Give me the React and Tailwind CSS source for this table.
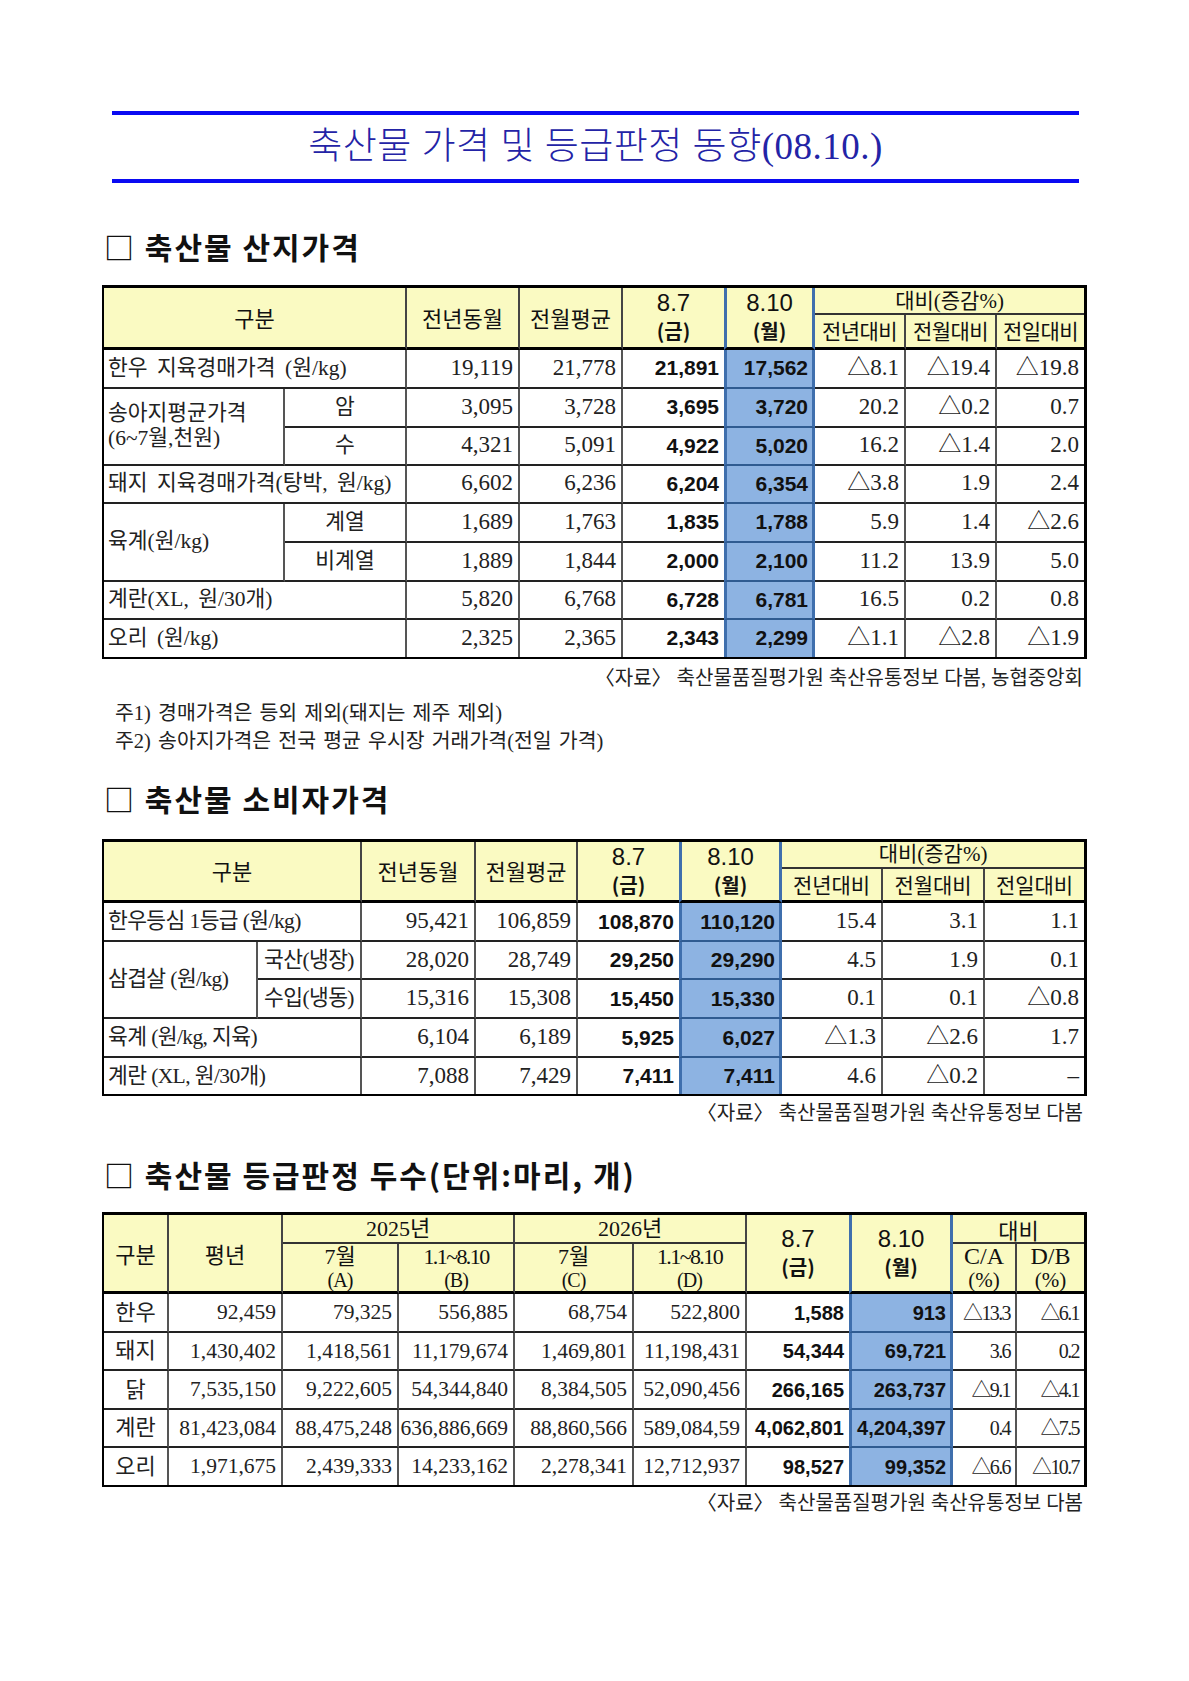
const SERIF = "font-['Liberation_Serif','Noto_Sans_CJK_KR',serif]";
const KR = "font-['Noto_Sans_CJK_KR',sans-serif]";
const BOLDN = "font-['Liberation_Sans','Noto_Sans_CJK_KR',sans-serif] font-bold";
const HEAD = "bg-[#fafac2] text-[#111] text-center align-middle p-0";

// one row of value cells: kinds n = plain number, b = bold, blue = bold on blue, r = ratio, c = condensed ratio
function Values({ vals, kinds, last, small }) {
  return vals.map((v, i) => {
    const k = kinds[i];
    const lastCol = i === vals.length - 1;
    const nextBlue = kinds[i + 1] === "blue";
    let cls = "align-middle text-right whitespace-nowrap p-0 ";
    if (k === "blue") {
      cls += "bg-[#8db3e2] border-x-[3px] border-x-[#3f6fad] pr-[4px] text-[#111] " + BOLDN + (small ? " text-[20px]" : " text-[21px]");
    } else if (k === "b") {
      cls += "pr-[5px] text-[#111] " + BOLDN + (small ? " text-[20px]" : " text-[21px]");
    } else if (k === "c") {
      cls += "pr-[5px] text-[#222] tracking-[-1.6px] text-[20px] " + SERIF;
    } else {
      cls += "pr-[5px] text-[#222] " + SERIF + (small ? " text-[21.5px]" : " text-[23px]");
    }
    if (!last) cls += k === "blue" ? " border-b-2 border-b-[#2f5b91]" : " border-b-2 border-b-[#222]";
    if (!lastCol && !nextBlue && k !== "blue") cls += " border-r-2 border-r-[#555]";
    return (
      <td key={i} className={cls}>
        {v}
      </td>
    );
  });
}

function Label({ children, colSpan, rowSpan, center, last, tight }) {
  return (
    <td
      colSpan={colSpan}
      rowSpan={rowSpan}
      className={
        "align-middle p-0 whitespace-nowrap text-[#222] text-[21.5px] border-r-2 border-r-[#555] " +
        SERIF +
        (center ? " text-center" : " text-left pl-[4px]") +
        (tight ? " tracking-[-0.6px]" : " [word-spacing:4px]") +
        (last ? "" : " border-b-2 border-b-[#222]")
      }
    >
      {children}
    </td>
  );
}

function Heading({ children, className }) {
  return (
    <div className={"h-[40px] flex items-center pl-[2px] text-[30px] tracking-[2px] font-bold text-[#111] whitespace-nowrap " + KR + " " + className}>
      {children}
    </div>
  );
}

function Source({ children, className }) {
  return (
    <div className={"h-[24px] leading-[24px] text-right pr-[4px] text-[20px] text-[#222] " + SERIF + " " + className}>
      {children}
    </div>
  );
}

function DayHead({ day, wd, blue, rowSpan }) {
  return (
    <th
      rowSpan={rowSpan}
      className={
        HEAD +
        " border-b-[3px] border-b-black " +
        (blue ? "border-x-[3px] border-x-[#3f6fad]" : "")
      }
    >
      <div className="font-['Liberation_Sans',sans-serif] font-normal text-[24px] leading-[27px]">{day}</div>
      <div className={"text-[20px] leading-[29px] font-bold " + KR}>{wd}</div>
    </th>
  );
}

const kinds1 = ["n", "n", "b", "blue", "r", "r", "r"];

export default function App() {
  return (
    <div className="min-h-[1681px] w-[1189px] bg-white pt-[111px]">
      {/* title */}
      <div className="ml-[112px] w-[967px]">
        <div className="h-[4px] bg-[#0a0af2]" />
        <div className={"h-[64px] flex items-center justify-center text-[37px] font-light tracking-[0.5px] text-[#2323a6] whitespace-nowrap " + SERIF}>
          축산물 가격 및 등급판정 동향(08.10.)
        </div>
        <div className="h-[4px] bg-[#0a0af2]" />
      </div>

      <div className="ml-[102px] w-[985px]">
        <Heading className="mt-[43px]">□ 축산물 산지가격</Heading>

        {/* table 1 */}
        <table className="mt-[19px] w-[985px] table-fixed border-separate border-spacing-0 border-t-[3px] border-l-2 border-r-[3px] border-b-2 border-black">
          <colgroup>
            <col className="w-[181px]" />
            <col className="w-[122px]" />
            <col className="w-[113px]" />
            <col className="w-[103px]" />
            <col className="w-[101px]" />
            <col className="w-[91px]" />
            <col className="w-[91px]" />
            <col className="w-[91px]" />
            <col className="w-[87px]" />
          </colgroup>
          <thead>
            <tr className="h-[27px]">
              <th colSpan={2} rowSpan={2} className={HEAD + " font-normal text-[22px] border-r-2 border-r-[#444] border-b-[3px] border-b-black " + KR}>
                구분
              </th>
              <th rowSpan={2} className={HEAD + " font-normal text-[22px] border-r-2 border-r-[#444] border-b-[3px] border-b-black " + KR}>
                전년동월
              </th>
              <th rowSpan={2} className={HEAD + " font-normal text-[22px] border-r-2 border-r-[#444] border-b-[3px] border-b-black " + KR}>
                전월평균
              </th>
              <DayHead day="8.7" wd="(금)" rowSpan={2} />
              <DayHead day="8.10" wd="(월)" rowSpan={2} blue />
              <th colSpan={3} className={HEAD + " font-normal text-[21px] leading-[24px] border-b-2 border-b-[#333] " + SERIF}>
                대비(증감%)
              </th>
            </tr>
            <tr className="h-[34px]">
              <th className={HEAD + " font-normal text-[21px] tracking-[-0.5px] border-r-2 border-r-[#444] border-b-[3px] border-b-black " + KR}>전년대비</th>
              <th className={HEAD + " font-normal text-[21px] tracking-[-0.5px] border-r-2 border-r-[#444] border-b-[3px] border-b-black " + KR}>전월대비</th>
              <th className={HEAD + " font-normal text-[21px] tracking-[-0.5px] border-b-[3px] border-b-black " + KR}>전일대비</th>
            </tr>
          </thead>
          <tbody>
            <tr className="h-[39px]">
              <Label colSpan={2}>한우 지육경매가격 (원/kg)</Label>
              <Values vals={["19,119", "21,778", "21,891", "17,562", "△8.1", "△19.4", "△19.8"]} kinds={kinds1} />
            </tr>
            <tr className="h-[39px]">
              <Label rowSpan={2}>
                <div className="leading-[25px]">송아지평균가격</div>
                <div className="leading-[25px]">(6~7월,천원)</div>
              </Label>
              <Label center>암</Label>
              <Values vals={["3,095", "3,728", "3,695", "3,720", "20.2", "△0.2", "0.7"]} kinds={kinds1} />
            </tr>
            <tr className="h-[38px]">
              <Label center>수</Label>
              <Values vals={["4,321", "5,091", "4,922", "5,020", "16.2", "△1.4", "2.0"]} kinds={kinds1} />
            </tr>
            <tr className="h-[38px]">
              <Label colSpan={2}>돼지 지육경매가격(탕박, 원/kg)</Label>
              <Values vals={["6,602", "6,236", "6,204", "6,354", "△3.8", "1.9", "2.4"]} kinds={kinds1} />
            </tr>
            <tr className="h-[39px]">
              <Label rowSpan={2}>육계(원/kg)</Label>
              <Label center>계열</Label>
              <Values vals={["1,689", "1,763", "1,835", "1,788", "5.9", "1.4", "△2.6"]} kinds={kinds1} />
            </tr>
            <tr className="h-[39px]">
              <Label center>비계열</Label>
              <Values vals={["1,889", "1,844", "2,000", "2,100", "11.2", "13.9", "5.0"]} kinds={kinds1} />
            </tr>
            <tr className="h-[38px]">
              <Label colSpan={2}>계란(XL, 원/30개)</Label>
              <Values vals={["5,820", "6,768", "6,728", "6,781", "16.5", "0.2", "0.8"]} kinds={kinds1} />
            </tr>
            <tr className="h-[37px]">
              <Label colSpan={2} last>오리 (원/kg)</Label>
              <Values vals={["2,325", "2,365", "2,343", "2,299", "△1.1", "△2.8", "△1.9"]} kinds={kinds1} last />
            </tr>
          </tbody>
        </table>

        <Source className="mt-[7px]">〈자료〉 축산물품질평가원 축산유통정보 다봄, 농협중앙회</Source>

        <div className={"mt-[9px] pl-[13px] text-[20.5px] leading-[28px] text-[#222] [word-spacing:2px] " + SERIF}>
          <div>주1) 경매가격은 등외 제외(돼지는 제주 제외)</div>
          <div>주2) 송아지가격은 전국 평균 우시장 거래가격(전일 가격)</div>
        </div>

        <Heading className="mt-[24px]">□ 축산물 소비자가격</Heading>

        {/* table 2 */}
        <table className="mt-[20px] w-[985px] table-fixed border-separate border-spacing-0 border-t-[3px] border-l-2 border-r-[3px] border-b-2 border-black">
          <colgroup>
            <col className="w-[154px]" />
            <col className="w-[104px]" />
            <col className="w-[114px]" />
            <col className="w-[102px]" />
            <col className="w-[101px]" />
            <col className="w-[103px]" />
            <col className="w-[101px]" />
            <col className="w-[102px]" />
            <col className="w-[99px]" />
          </colgroup>
          <thead>
            <tr className="h-[27px]">
              <th colSpan={2} rowSpan={2} className={HEAD + " font-normal text-[22px] border-r-2 border-r-[#444] border-b-[3px] border-b-black " + KR}>
                구분
              </th>
              <th rowSpan={2} className={HEAD + " font-normal text-[22px] border-r-2 border-r-[#444] border-b-[3px] border-b-black " + KR}>
                전년동월
              </th>
              <th rowSpan={2} className={HEAD + " font-normal text-[22px] border-r-2 border-r-[#444] border-b-[3px] border-b-black " + KR}>
                전월평균
              </th>
              <DayHead day="8.7" wd="(금)" rowSpan={2} />
              <DayHead day="8.10" wd="(월)" rowSpan={2} blue />
              <th colSpan={3} className={HEAD + " font-normal text-[21px] leading-[24px] border-b-2 border-b-[#333] " + SERIF}>
                대비(증감%)
              </th>
            </tr>
            <tr className="h-[34px]">
              <th className={HEAD + " font-normal text-[21px] border-r-2 border-r-[#444] border-b-[3px] border-b-black " + KR}>전년대비</th>
              <th className={HEAD + " font-normal text-[21px] border-r-2 border-r-[#444] border-b-[3px] border-b-black " + KR}>전월대비</th>
              <th className={HEAD + " font-normal text-[21px] border-b-[3px] border-b-black " + KR}>전일대비</th>
            </tr>
          </thead>
          <tbody>
            <tr className="h-[39px]">
              <Label colSpan={2} tight>한우등심 1등급 (원/kg)</Label>
              <Values vals={["95,421", "106,859", "108,870", "110,120", "15.4", "3.1", "1.1"]} kinds={kinds1} />
            </tr>
            <tr className="h-[38px]">
              <Label rowSpan={2} tight>삼겹살 (원/kg)</Label>
              <Label center tight>국산(냉장)</Label>
              <Values vals={["28,020", "28,749", "29,250", "29,290", "4.5", "1.9", "0.1"]} kinds={kinds1} />
            </tr>
            <tr className="h-[39px]">
              <Label center tight>수입(냉동)</Label>
              <Values vals={["15,316", "15,308", "15,450", "15,330", "0.1", "0.1", "△0.8"]} kinds={kinds1} />
            </tr>
            <tr className="h-[39px]">
              <Label colSpan={2} tight>육계 (원/kg, 지육)</Label>
              <Values vals={["6,104", "6,189", "5,925", "6,027", "△1.3", "△2.6", "1.7"]} kinds={kinds1} />
            </tr>
            <tr className="h-[36px]">
              <Label colSpan={2} tight last>계란 (XL, 원/30개)</Label>
              <Values vals={["7,088", "7,429", "7,411", "7,411", "4.6", "△0.2", "–"]} kinds={kinds1} last />
            </tr>
          </tbody>
        </table>

        <Source className="mt-[5px]">〈자료〉 축산물품질평가원 축산유통정보 다봄</Source>

        <Heading className="mt-[29px]">□ 축산물 등급판정 두수(단위:마리, 개)</Heading>

        {/* table 3 */}
        <table className="mt-[18px] w-[985px] table-fixed border-separate border-spacing-0 border-t-[3px] border-l-2 border-r-[3px] border-b-2 border-black">
          <colgroup>
            <col className="w-[65px]" />
            <col className="w-[114px]" />
            <col className="w-[116px]" />
            <col className="w-[116px]" />
            <col className="w-[119px]" />
            <col className="w-[113px]" />
            <col className="w-[102px]" />
            <col className="w-[104px]" />
            <col className="w-[64px]" />
            <col className="w-[67px]" />
          </colgroup>
          <thead>
            <tr className="h-[29px]">
              <th rowSpan={2} className={HEAD + " font-normal text-[22px] border-r-2 border-r-[#444] border-b-[3px] border-b-black " + KR}>
                구분
              </th>
              <th rowSpan={2} className={HEAD + " font-normal text-[22px] border-r-2 border-r-[#444] border-b-[3px] border-b-black " + KR}>
                평년
              </th>
              <th colSpan={2} className={HEAD + " font-normal text-[22px] leading-[26px] border-r-2 border-r-[#444] border-b-2 border-b-[#333] " + SERIF}>
                2025년
              </th>
              <th colSpan={2} className={HEAD + " font-normal text-[22px] leading-[26px] border-r-2 border-r-[#444] border-b-2 border-b-[#333] " + SERIF}>
                2026년
              </th>
              <DayHead day="8.7" wd="(금)" rowSpan={2} />
              <DayHead day="8.10" wd="(월)" rowSpan={2} blue />
              <th colSpan={2} className={HEAD + " font-normal text-[22px] leading-[26px] border-b-2 border-b-[#333] " + KR}>
                대비
              </th>
            </tr>
            <tr className="h-[50px]">
              {[
                ["7월", "(A)"],
                ["1.1~8.10", "(B)"],
                ["7월", "(C)"],
                ["1.1~8.10", "(D)"],
              ].map(([a, b], i) => (
                <th key={i} className={HEAD + " font-normal border-r-2 border-r-[#444] border-b-[3px] border-b-black align-bottom " + SERIF}>
                  <div className={"text-[22px] leading-[24px] " + (a.length > 3 ? "tracking-[-1.6px]" : "")}>{a}</div>
                  <div className="text-[20px] leading-[22px] tracking-[-1px]">{b}</div>
                </th>
              ))}
              <th className={HEAD + " font-normal border-r-2 border-r-[#444] border-b-[3px] border-b-black align-bottom " + SERIF}>
                <div className="text-[24px] leading-[25px]">C/A</div>
                <div className="text-[21px] leading-[22px]">(%)</div>
              </th>
              <th className={HEAD + " font-normal border-b-[3px] border-b-black align-bottom " + SERIF}>
                <div className="text-[24px] leading-[25px]">D/B</div>
                <div className="text-[21px] leading-[22px]">(%)</div>
              </th>
            </tr>
          </thead>
          <tbody>
            {[
              ["한우", ["92,459", "79,325", "556,885", "68,754", "522,800", "1,588", "913", "△13.3", "△6.1"], "h-[39px]"],
              ["돼지", ["1,430,402", "1,418,561", "11,179,674", "1,469,801", "11,198,431", "54,344", "69,721", "3.6", "0.2"], "h-[38px]"],
              ["닭", ["7,535,150", "9,222,605", "54,344,840", "8,384,505", "52,090,456", "266,165", "263,737", "△9.1", "△4.1"], "h-[39px]"],
              ["계란", ["81,423,084", "88,475,248", "636,886,669", "88,860,566", "589,084,59", "4,062,801", "4,204,397", "0.4", "△7.5"], "h-[38px]"],
              ["오리", ["1,971,675", "2,439,333", "14,233,162", "2,278,341", "12,712,937", "98,527", "99,352", "△6.6", "△10.7"], "h-[37px]"],
            ].map(([name, vals, h], i) => (
              <tr key={name} className={h}>
                <Label center last={i === 4}>
                  <span className="text-[22px]">{name}</span>
                </Label>
                <Values vals={vals} kinds={["n", "n", "n", "n", "n", "b", "blue", "c", "c"]} last={i === 4} small />
              </tr>
            ))}
          </tbody>
        </table>

        <Source className="mt-[4px]">〈자료〉 축산물품질평가원 축산유통정보 다봄</Source>
      </div>
    </div>
  );
}
